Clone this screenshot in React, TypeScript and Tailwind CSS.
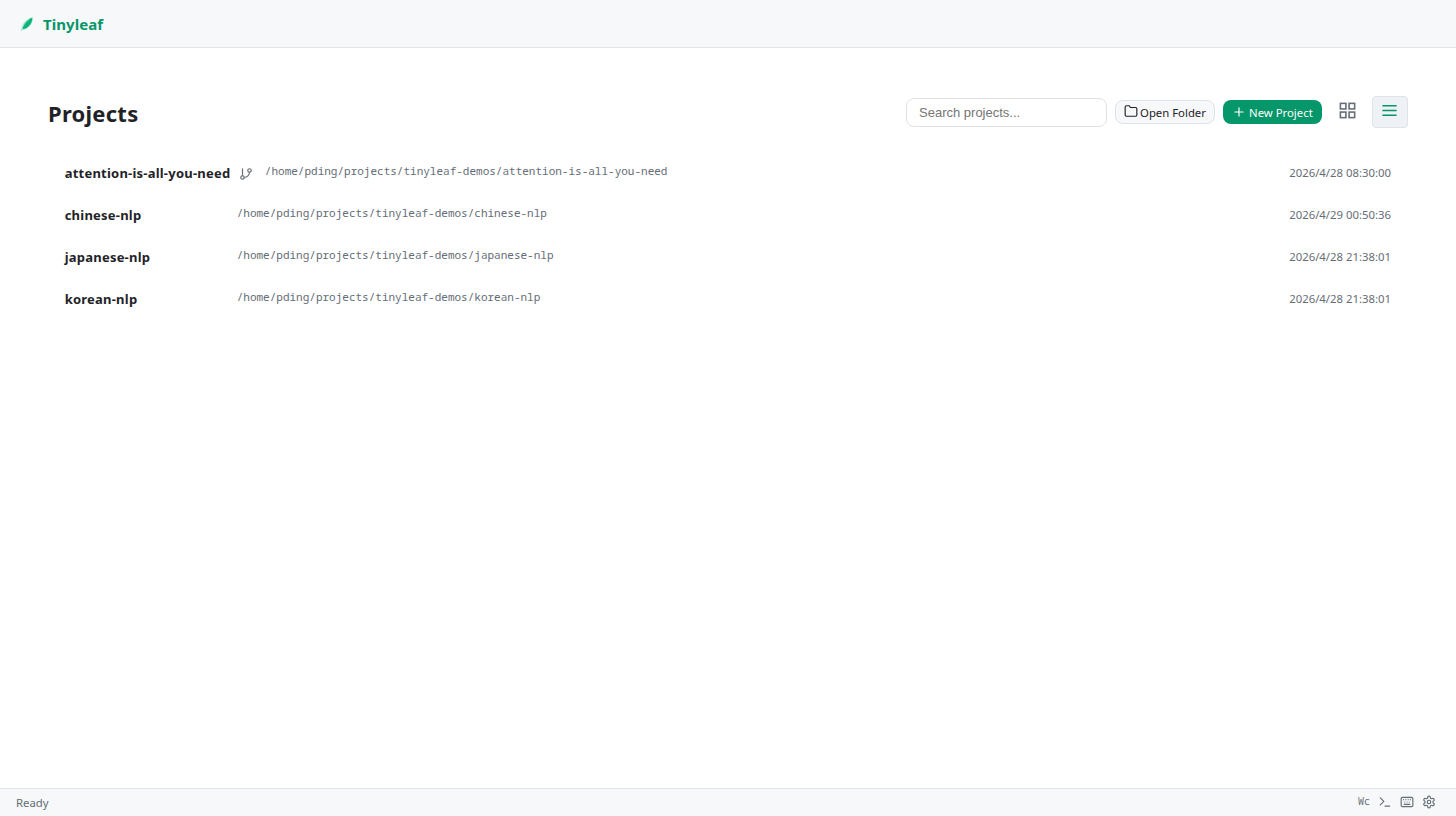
import React from "react";

const mono = "font-['Noto_Sans_Mono','DejaVu_Sans_Mono',monospace]";

interface Project {
  name: string;
  modified: string;
  git?: boolean;
}

const projects: Project[] = [
  { name: "attention-is-all-you-need", modified: "2026/4/28 08:30:00", git: true },
  { name: "chinese-nlp", modified: "2026/4/29 00:50:36" },
  { name: "japanese-nlp", modified: "2026/4/28 21:38:01" },
  { name: "korean-nlp", modified: "2026/4/28 21:38:01" },
];

interface IconProps {
  size: number;
  width?: number;
  square?: boolean;
  className?: string;
  children: React.ReactNode;
}

function Icon({ size, width = 2, square, className, children }: IconProps) {
  return (
    <svg
      width={size}
      height={size}
      viewBox="0 0 24 24"
      fill="none"
      stroke="currentColor"
      strokeWidth={width}
      strokeLinecap={square ? "butt" : "round"}
      strokeLinejoin={square ? "miter" : "round"}
      className={className}
    >
      {children}
    </svg>
  );
}

function Leaf() {
  return (
    <svg width="14" height="16" viewBox="0 0 14 16" className="shrink-0">
      <path d="M1 15.200C.8 9.500 4.800 2.800 12.900 1 13.600 6.500 9.800 12.600 3.300 13.800Z" fill="#b5ecd7" />
      <path d="M2.700 13.200C2.300 9.500 6.500 3.400 12.200 1.700 12.700 6 9.200 12.200 2.700 13.200Z" fill="#10b27c" />
      <path d="M1.300 14.800C2.200 11 5.300 6 9.600 3" fill="none" stroke="#a2e6cc" strokeWidth=".6" />
    </svg>
  );
}

export default function App() {
  return (
    <div className="flex h-screen flex-col bg-white font-['Noto_Sans',sans-serif] text-[#1f2328]">
      <header className="flex h-12 shrink-0 items-center border-b border-[#e1e4e8] bg-[#f6f8fa] pl-5">
        <Leaf />
        <span className="ml-[9px] text-[15px] leading-5 font-bold tracking-[0.05px] text-[#059669]">Tinyleaf</span>
      </header>

      <main className="flex-1 px-12 pt-12">
        <div className="flex h-8 items-center">
          <h1 className="mt-0.5 flex-1 text-[22px] leading-[30px] font-bold tracking-[0.25px]">Projects</h1>
          <div className="flex items-center gap-2">
            <input
              placeholder="Search projects..."
              className="h-[29px] w-[201px] rounded-lg border border-[#dfe3e8] px-3 font-['Liberation_Sans',sans-serif] text-[13px] placeholder:text-[#757575]"
            />
            <button className="flex h-6 w-[100px] items-center rounded-lg border border-[#dfe3e8] bg-[#f6f8fa] pl-[7.500px] text-[11.350px] leading-4 whitespace-nowrap">
              <Icon size={14} className="mr-[2.500px] mb-0.5 shrink-0">
                <path d="M22 19a2 2 0 0 1-2 2H4a2 2 0 0 1-2-2V5a2 2 0 0 1 2-2h5l2 3h9a2 2 0 0 1 2 2z" />
              </Icon>
              <span className="mt-0.5">Open Folder</span>
            </button>
            <button className="flex h-6 w-[99px] items-center rounded-lg bg-[#059669] pl-[9px] text-[11.350px] leading-4 whitespace-nowrap text-white">
              <Icon size={14} className="mr-[3px] shrink-0">
                <path d="M12 5v14M5 12h14" />
              </Icon>
              <span className="mt-0.5">New Project</span>
            </button>
            <button className="flex h-8 w-[34.400px] items-center justify-center pb-1 text-[#656d76]">
              <Icon size={19} square>
                <rect x="3" y="3" width="7" height="7" />
                <rect x="14" y="3" width="7" height="7" />
                <rect x="14" y="14" width="7" height="7" />
                <rect x="3" y="14" width="7" height="7" />
              </Icon>
            </button>
            <button className="flex h-8 w-[35.600px] items-center justify-center rounded border border-[#dfe3e8] bg-[#eef1f5] pb-1 text-[#059669]">
              <Icon size={19} square className="mr-px">
                <path d="M3 6h18M3 12h18M3 18h18" />
              </Icon>
            </button>
          </div>
        </div>

        <div className="mt-6">
          {projects.map((p) => (
            <div key={p.name} className="flex h-[42px] items-center pr-[17px] pb-0.5 pl-[16.700px]">
              <div className="flex min-w-[160px] items-center">
                <span className="mt-0.5 text-[13px] leading-[18px] font-bold tracking-[0.22px]">{p.name}</span>
                {p.git && (
                  <Icon size={14} className="mt-[3px] ml-[8.500px] text-[#656d76]">
                    <path d="M6 3v12" />
                    <circle cx="18" cy="6" r="3" />
                    <circle cx="6" cy="18" r="3" />
                    <path d="M18 9a9 9 0 0 1-9 9" />
                  </Icon>
                )}
              </div>
              <span className={`mb-[3px] ml-3 flex-1 text-[11px] leading-[15px] text-[#656d76] ${mono}`}>
                /home/pding/projects/tinyleaf-demos/{p.name}
              </span>
              <span className="mt-0.5 text-[11.350px] leading-4 text-[#656d76]">{p.modified}</span>
            </div>
          ))}
        </div>
      </main>

      <footer className="flex h-7 shrink-0 items-center border-t border-[#e1e4e8] bg-[#f6f8fa] pr-5 pl-4 text-[#656d76]">
        <span className="mt-px flex-1 text-[11.350px] leading-4">Ready</span>
        <span className={`mr-2 mb-[3px] text-[10px] leading-3 ${mono}`}>Wc</span>
        <Icon size={14} className="mr-2 mb-px">
          <path d="m4 17 6-6-6-6M12 19h8" />
        </Icon>
        <Icon size={14} className="mr-2 mb-px">
          <rect x="2" y="4" width="20" height="16" rx="2" />
          <path d="M6 8h.01M10 8h.01M14 8h.01M18 8h.01M8 12h.01M12 12h.01M16 12h.01M7 16h10" />
        </Icon>
        <Icon size={14} className="mb-px">
          <circle cx="12" cy="12" r="3" />
          <path d="M12.220 2h-.440a2 2 0 0 0-2 2v.180a2 2 0 0 1-1 1.730l-.430.250a2 2 0 0 1-2 0l-.150-.080a2 2 0 0 0-2.730.730l-.220.380a2 2 0 0 0 .730 2.730l.150.100a2 2 0 0 1 1 1.720v.510a2 2 0 0 1-1 1.740l-.150.090a2 2 0 0 0-.730 2.730l.220.380a2 2 0 0 0 2.730.730l.150-.080a2 2 0 0 1 2 0l.430.250a2 2 0 0 1 1 1.730V20a2 2 0 0 0 2 2h.440a2 2 0 0 0 2-2v-.180a2 2 0 0 1 1-1.730l.430-.250a2 2 0 0 1 2 0l.150.080a2 2 0 0 0 2.730-.730l.220-.390a2 2 0 0 0-.730-2.730l-.150-.080a2 2 0 0 1-1-1.740v-.500a2 2 0 0 1 1-1.740l.150-.090a2 2 0 0 0 .730-2.730l-.220-.380a2 2 0 0 0-2.730-.730l-.150.080a2 2 0 0 1-2 0l-.430-.250a2 2 0 0 1-1-1.730V4a2 2 0 0 0-2-2z" />
        </Icon>
      </footer>
    </div>
  );
}
